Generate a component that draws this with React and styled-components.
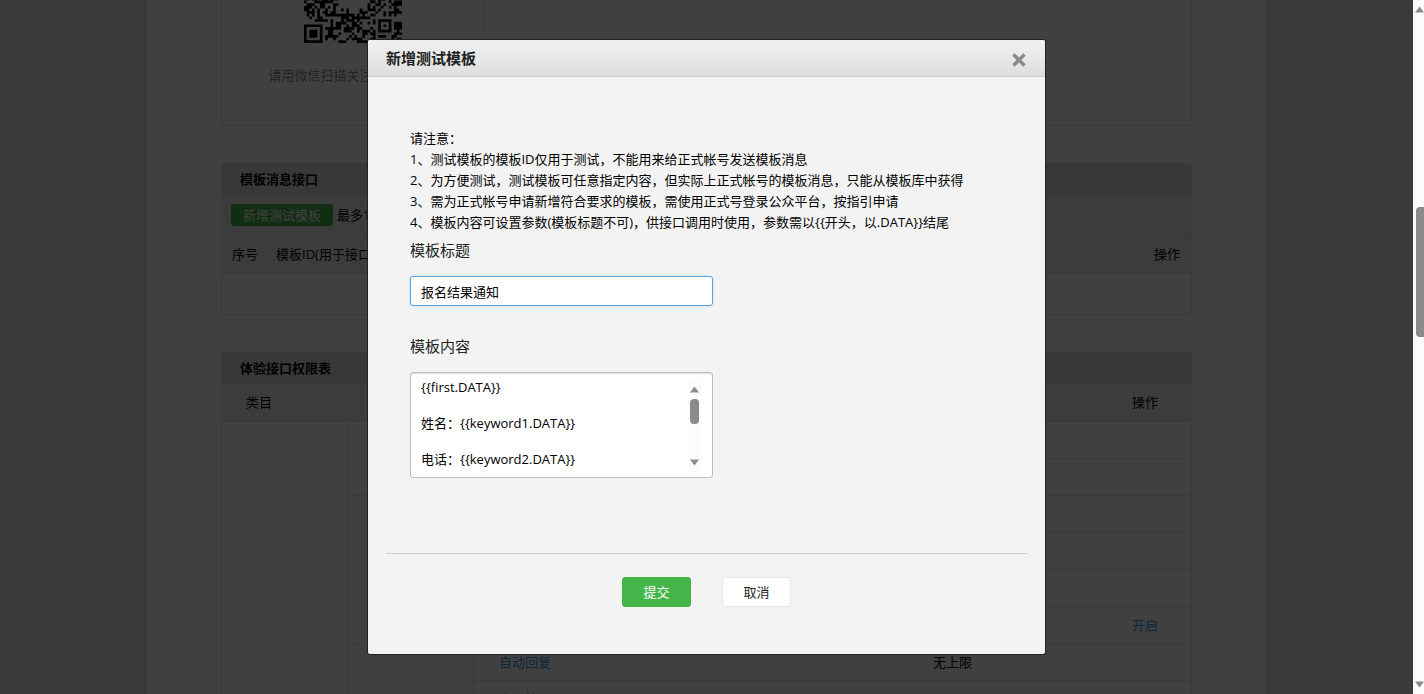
import React, { useState } from 'react';
import styled, { createGlobalStyle } from 'styled-components';

const GlobalStyle = createGlobalStyle`
  * {
    box-sizing: border-box;
  }

  body {
    margin: 0;
    background: #e8e8e8;
    color: #000;
    font: 13px/21px 'Open Sans', 'Noto Sans CJK SC', sans-serif;
  }

  button, input, textarea {
    font: inherit;
    color: inherit;
  }
`;

const Shell = styled.div`
  display: flex;
  height: 100vh;
  overflow: hidden;
`;

const Viewport = styled.div`
  position: relative;
  flex: 1;
  overflow: hidden;
`;

const Page = styled.main`
  display: flex;
  flex-direction: column;
  gap: 37px;
  max-width: 1121px;
  min-height: 100vh;
  margin: 0 auto;
  padding: 0 74px;
  background: #fff;
  border: solid #e0e0e0;
  border-width: 0 1px;
`;

const Panel = styled.section`
  border: 1px solid #e2e2e2;
  border-radius: 3px;
  overflow: hidden;
`;

const FollowPanel = styled(Panel)`
  display: flex;
  height: 126px;
  border-top: 0;
  border-radius: 0 0 3px 3px;
`;

const FollowBox = styled.div`
  display: flex;
  flex-direction: column;
  justify-content: flex-end;
  align-items: center;
  width: 263px;
  padding-bottom: 39px;
  gap: 22px;
  border-right: 1px solid #eaeaea;
  color: #8d8d8d;
`;

const PanelTitle = styled.h2`
  margin: 0;
  padding: 5px 18px;
  background: #e0e0e0;
  border-bottom: 1px solid #d2d2d2;
  font-size: 13px;
  line-height: 20px;
`;

const Toolbar = styled.div`
  display: flex;
  align-items: center;
  gap: 4px;
  height: 41px;
  padding: 0 9px;
  background: #f0f0f0;
  border-bottom: 1px solid #e2e2e2;
`;

const AddButton = styled.button`
  height: 22px;
  padding: 0 12px;
  border: 0;
  border-radius: 3px;
  background: #44b549;
  color: #fff;
  line-height: 22px;
`;

const Table = styled.table`
  width: 100%;
  table-layout: fixed;
  border-collapse: separate;
  border-spacing: 0;
`;

const Th = styled.th`
  width: ${(props) => props.$width || 'auto'};
  height: 38px;
  padding: 0 0 0 ${(props) => props.$indent};
  background: #f0f0f0;
  border: solid #e2e2e2;
  border-width: 0 0 1px ${(props) => (props.$first ? '0' : '1px')};
  font-weight: normal;
  text-align: left;
  white-space: nowrap;
`;

const Td = styled.td`
  height: ${(props) => props.$height || '37px'};
  padding: 0 0 0 25px;
  border-bottom: ${(props) => (props.$height ? '0' : '1px')} solid #e8e8e8;
  border-left: ${(props) => (props.$ruled ? '1px solid #e2e2e2' : '0')};
  vertical-align: middle;
`;

const PageLink = styled.a`
  color: #459ae9;
  text-decoration: none;
`;

const Overlay = styled.div`
  position: absolute;
  inset: 0;
  display: flex;
  justify-content: center;
  align-items: flex-start;
  padding-top: 40px;
  background: rgba(0, 0, 0, 0.75);
`;

const Dialog = styled.div`
  width: 677px;
  max-width: 100%;
  background: #f3f3f3;
  border-radius: 2px;
  box-shadow: 0 0 0 1px #222;
  overflow: hidden;
`;

const DialogHeader = styled.header`
  display: flex;
  justify-content: space-between;
  align-items: center;
  height: 37px;
  padding: 0 18px;
  border-bottom: 1px solid #cdcdcd;
  background: linear-gradient(#f1f1f1, #dedede);
`;

const DialogTitle = styled.h3`
  margin: 0;
  color: #222;
  font-size: 15px;
  line-height: 21px;
`;

const CloseButton = styled.button`
  display: flex;
  padding: 3px 1px 0;
  border: 0;
  background: none;
`;

const DialogBody = styled.div`
  padding: 51px 42px 75px;
`;

const Notice = styled.p`
  margin: 0 0 7px;
`;

const Field = styled.div`
  display: flex;
  flex-direction: column;
  align-items: flex-start;
  gap: 15px;
  margin-bottom: ${(props) => (props.$last ? '0' : '30px')};
`;

const Label = styled.label`
  color: #222;
  font-size: 15px;
  line-height: 21px;
`;

const TextInput = styled.input`
  width: 303px;
  height: 30px;
  padding: 0 10px;
  border: 1px solid #54a0dc;
  border-radius: 3px;
  background: #fff;
  box-shadow: 0 0 4px #d4e6f5;
  outline: none;
`;

const TextAreaBox = styled.div`
  display: flex;
  width: 303px;
  height: 106px;
  padding: 5px 10px;
  border: 1px solid #bdbdbd;
  border-radius: 3px;
  background: #fff;
  box-shadow: inset 0 1px 1px #ddd;
`;

const TextArea = styled.textarea`
  flex: 1;
  min-width: 0;
  padding: 0;
  border: 0;
  background: none;
  line-height: 18px;
  outline: none;
  resize: none;
  scrollbar-width: none;
`;

const AreaScroll = styled.div`
  display: flex;
  flex-direction: column;
  align-items: center;
  width: 15px;
  padding: 8px 0 6px;
  background: #fcfcfc;
`;

const PageScroll = styled(AreaScroll)`
  align-items: flex-end;
  width: 11px;
  padding: 6px 0;
`;

const Thumb = styled.div`
  width: ${(props) => props.$width};
  height: ${(props) => props.$height};
  margin-top: ${(props) => props.$top};
  border-radius: ${(props) => props.$radius};
  background: #8b8b8b;
`;

const Arrow = styled.svg`
  display: block;
  width: 9px;
  height: 7px;
  fill: #8b8b8b;
  margin-top: ${(props) => (props.$end ? 'auto' : '0')};
`;

const DialogFooter = styled.footer`
  display: flex;
  justify-content: center;
  gap: 31px;
  margin: 0 18px;
  padding: 23px 0 47px;
  border-top: 1px solid #d0d0d0;
`;

const Button = styled.button`
  width: 69px;
  height: 30px;
  padding: 0;
  border: 1px solid ${(props) => (props.$primary ? '#44b549' : '#e7e7eb')};
  border-radius: 3px;
  background: ${(props) => (props.$primary ? '#44b549' : '#fff')};
  color: ${(props) => (props.$primary ? '#fff' : '#222')};
`;

const QR_SIZE = 37;

// finder squares sit in three corners, the small alignment square in the fourth
const inSquare = (x, y, left, top, size) => {
  const dx = x - left;
  const dy = y - top;
  if (dx < -1 || dy < -1 || dx > size || dy > size) return null;
  const ring = Math.min(dx, dy, size - 1 - dx, size - 1 - dy);
  return ring === 0 || ring >= 2;
};

const isDark = (x, y) => {
  const squares = [[0, 0, 7], [30, 0, 7], [0, 30, 7], [28, 28, 5]];
  for (const [left, top, size] of squares) {
    const dark = inSquare(x, y, left, top, size);
    if (dark !== null) return dark;
  }
  if (x > 12 && x < 24 && y > 12 && y < 24) return false;
  return ((x * 73 + y * 151 + x * y * 37 + ((x * x * 11) ^ (y * y * 29))) % 17) > 7;
};

function QrCode() {
  let d = '';
  for (let y = 0; y < QR_SIZE; y++) {
    for (let x = 0; x < QR_SIZE; x++) {
      if (isDark(x, y)) d += `M${x} ${y}h1v1h-1z`;
    }
  }
  return (
    <QrSvg viewBox="0 0 37 37" role="img" aria-label="二维码">
      <path d={d} />
    </QrSvg>
  );
}

const QrSvg = styled.svg`
  flex-shrink: 0;
  width: 98px;
  height: 98px;
`;

const UpArrow = () => (
  <Arrow viewBox="0 0 9 7"><path d="M4.5 0.5 9 6.5H0z" /></Arrow>
);

const DownArrow = () => (
  <Arrow $end viewBox="0 0 9 7"><path d="M4.5 6.5 0 0.5h9z" /></Arrow>
);

const notes = [
  '请注意：',
  '1、测试模板的模板ID仅用于测试，不能用来给正式帐号发送模板消息',
  '2、为方便测试，测试模板可任意指定内容，但实际上正式帐号的模板消息，只能从模板库中获得',
  '3、需为正式帐号申请新增符合要求的模板，需使用正式号登录公众平台，按指引申请',
  '4、模板内容可设置参数(模板标题不可)，供接口调用时使用，参数需以{{开头，以.DATA}}结尾',
];

const permissions = [
  { group: 2 },
  {},
  { group: 4 },
  {},
  {},
  { action: '开启' },
  { group: 2, name: '自动回复', limit: '无上限' },
  { name: '主要接口', limit: '500000' },
];

const defaultContent = `{{first.DATA}}

姓名：{{keyword1.DATA}}

电话：{{keyword2.DATA}}

时间：{{keyword3.DATA}}

{{remark.DATA}}`;

function TemplateDialog() {
  const [title, setTitle] = useState('报名结果通知');
  const [content, setContent] = useState(defaultContent);

  return (
    <Overlay>
      <Dialog role="dialog" aria-labelledby="dialog-title">
        <DialogHeader>
          <DialogTitle id="dialog-title">新增测试模板</DialogTitle>
          <CloseButton type="button" aria-label="关闭">
            <svg width="14" height="14" viewBox="0 0 14 14" stroke="#8a8a8a" strokeWidth="3.4">
              <path d="M1.5 1.5l11 11M12.5 1.5l-11 11" />
            </svg>
          </CloseButton>
        </DialogHeader>
        <DialogBody>
          <Notice>
            {notes.map((note) => (
              <React.Fragment key={note}>{note}<br /></React.Fragment>
            ))}
          </Notice>
          <Field>
            <Label htmlFor="tpl-title">模板标题</Label>
            <TextInput id="tpl-title" value={title} onChange={(e) => setTitle(e.target.value)} />
          </Field>
          <Field $last>
            <Label htmlFor="tpl-content">模板内容</Label>
            <TextAreaBox>
              <TextArea id="tpl-content" value={content} onChange={(e) => setContent(e.target.value)} />
              <AreaScroll>
                <UpArrow />
                <Thumb $width="9px" $height="25px" $top="6px" $radius="4px" />
                <DownArrow />
              </AreaScroll>
            </TextAreaBox>
          </Field>
        </DialogBody>
        <DialogFooter>
          <Button type="button" $primary>提交</Button>
          <Button type="button">取消</Button>
        </DialogFooter>
      </Dialog>
    </Overlay>
  );
}

function App() {
  return (
    <Shell>
      <GlobalStyle />
      <Viewport>
        <Page>
          <FollowPanel>
            <FollowBox>
              <QrCode />
              <span>请用微信扫描关注测试公众号</span>
            </FollowBox>
          </FollowPanel>

          <Panel>
            <PanelTitle>模板消息接口</PanelTitle>
            <Toolbar>
              <AddButton type="button">新增测试模板</AddButton>
              <span>最多10个</span>
            </Toolbar>
            <Table>
              <thead>
                <tr>
                  <Th $first $width="46px" $indent="10px">序号</Th>
                  <Th $indent="7px">模板ID(用于接口调用)</Th>
                  <Th $width="48px" $indent="10px">操作</Th>
                </tr>
              </thead>
              <tbody>
                <tr>
                  <Td colSpan={3} $height="40px" />
                </tr>
              </tbody>
            </Table>
          </Panel>

          <Panel>
            <PanelTitle>体验接口权限表</PanelTitle>
            <Table>
              <thead>
                <tr>
                  <Th $first $width="125px" $indent="24px">类目</Th>
                  <Th $width="126px" $indent="24px">功能</Th>
                  <Th $indent="24px">接口</Th>
                  <Th $width="199px" $indent="24px">每日调用上限/次</Th>
                  <Th $width="84px" $indent="24px">操作</Th>
                </tr>
              </thead>
              <tbody>
                {permissions.map((row, i) => (
                  <tr key={i}>
                    {i === 0 && <Td rowSpan={permissions.length} />}
                    {row.group && <Td $ruled rowSpan={row.group} />}
                    <Td $ruled>{row.name && <PageLink href="#">{row.name}</PageLink>}</Td>
                    <Td>{row.limit}</Td>
                    <Td>{row.action && <PageLink href="#">{row.action}</PageLink>}</Td>
                  </tr>
                ))}
              </tbody>
            </Table>
          </Panel>
        </Page>
        <TemplateDialog />
      </Viewport>
      <PageScroll>
        <UpArrow />
        <Thumb $width="8px" $height="130px" $top="194px" $radius="4px 0 0 4px" />
        <DownArrow />
      </PageScroll>
    </Shell>
  );
}

export default App;
